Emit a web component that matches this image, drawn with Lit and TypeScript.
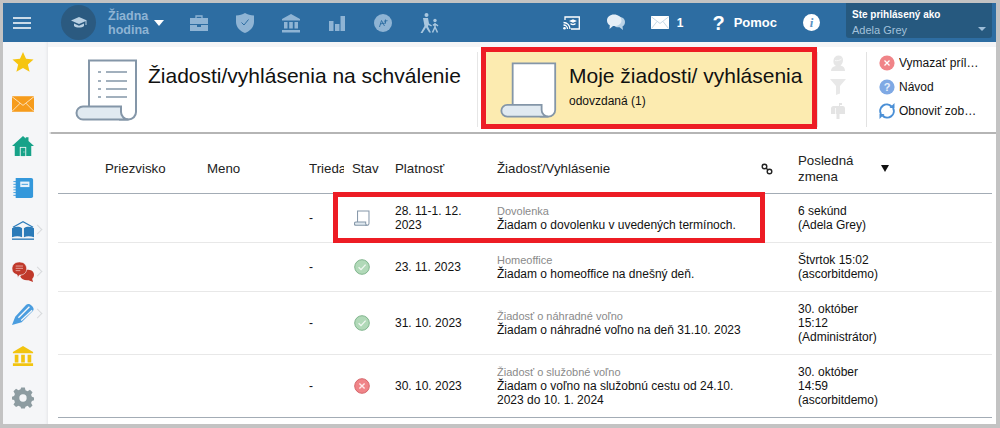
import { LitElement, html, css, svg } from "lit";
import { customElement } from "lit/decorators.js";

const scroll = (lines: boolean) => svg`
  <path d="M14 48V1.5H61V53a7.5 7.5 0 0 1-7.5 7.5H44" fill="#fff" stroke="#8496a8" stroke-width="2"/>
  <path d="M8 47.5H46V53a7.5 7.5 0 0 0 7.5 7.5H8a6.5 6.5 0 0 1-6.5-6.5A6.5 6.5 0 0 1 8 47.5z" fill="#e1eaf1" stroke="#8496a8" stroke-width="2"/>
  ${lines ? svg`<path d="M23 13h3M31 13h21M23 22h3M31 22h21M23 30h3M31 30h21M23 38h3M31 38h21" stroke="#8496a8" stroke-width="1.6" fill="none"/>` : ""}
`;

const okIcon = html`<svg class="st" viewBox="0 0 16 16"><circle cx="8" cy="8" r="7.3" fill="#b1d9b8" stroke="#80b58d"/><path d="M4.6 8.2l2.4 2.4 4.6-5" fill="none" stroke="#f1f8f2" stroke-width="1.3"/></svg>`;
const noIcon = html`<svg class="st" viewBox="0 0 16 16"><circle cx="8" cy="8" r="7.3" fill="#f08488" stroke="#d5676c"/><path d="M5.4 5.4l5.2 5.2M10.6 5.4l-5.2 5.2" fill="none" stroke="#fdeaea" stroke-width="1.4"/></svg>`;
const sentIcon = html`<svg class="st" viewBox="0 0 63 62"><path d="M14 48V3H59V53a7 7 0 0 1-7 7H44" fill="#fff" stroke="#8496a8" stroke-width="4"/><path d="M8 47H46V53a7 7 0 0 0 7 7H8a6.5 6.5 0 0 1 0-13z" fill="#dfe8ef" stroke="#8496a8" stroke-width="4"/></svg>`;

const rows = [
  { st: sentIcon, date: "28. 11-1. 12. 2023", kind: "Dovolenka", text: "Žiadam o dovolenku v uvedených termínoch.", last: ["6 sekúnd", "(Adela Grey)"] },
  { st: okIcon, date: "23. 11. 2023", kind: "Homeoffice", text: "Žiadam o homeoffice na dnešný deň.", last: ["Štvrtok 15:02", "(ascorbitdemo)"] },
  { st: okIcon, date: "31. 10. 2023", kind: "Žiadosť o náhradné voľno", text: "Žiadam o náhradné voľno na deň 31.10. 2023", last: ["30. október", "15:12", "(Administrátor)"] },
  { st: noIcon, date: "30. 10. 2023", kind: "Žiadosť o služobné voľno", text: "Žiadam o voľno na služobnú cestu od 24.10. 2023 do 10. 1. 2024", last: ["30. október", "14:59", "(ascorbitdemo)"] },
];

@customElement("app-root")
export class AppRoot extends LitElement {
  static styles = css`
    :host { display: block; width: 1000px; height: 428px; box-sizing: border-box; padding: 3px 4px 4px 3px; background: #c3c3c3; font-family: "Liberation Sans", Arial, sans-serif; font-size: 12px; color: #111; overflow: hidden; position: relative; }
    .app { height: 421px; display: flex; flex-direction: column; overflow: hidden; background: #fff; }
    svg { display: block; flex: none; }

    .top { height: 39px; flex: none; background: #2d6da2; display: flex; align-items: center; position: relative; z-index: 2; }
    .burger { margin-left: 10px; width: 18px; }
    .cap { margin-left: 30px; width: 35px; height: 35px; border-radius: 50%; background: #2b5a80; display: flex; align-items: center; justify-content: center; }
    .lesson { margin-left: 12px; width: 38px; font-size: 12.5px; font-weight: 700; line-height: 14px; color: #8fb4d4; }
    .caret { margin-left: 8px; width: 0; height: 0; border: 5.5px solid transparent; border-top: 6px solid #fff; border-bottom: 0; }
    .nav { margin-left: 26px; display: flex; gap: 28px; align-items: center; }
    .nav svg { width: 18px; height: 20px; }
    .nav svg.walk { width: 20px; }
    .right { margin-left: auto; display: flex; align-items: center; color: #fff; font-weight: 700; height: 100%; }
    .cast { margin-right: 27px; }
    .chat { margin-right: 26px; }
    .mailcount { margin-left: 8px; margin-right: 29px; }
    .help { font-size: 20px; line-height: 20px; margin-right: 9px; }
    .pomoc { margin-right: 26px; font-size: 13px; }
    .info { width: 17px; height: 17px; border-radius: 50%; background: #fff; color: #5d94c4; font: italic 700 13px/17px "Liberation Serif", serif; text-align: center; margin-right: 26px; }
    .user { width: 146px; height: 35px; margin-right: 4px; align-self: flex-start; box-sizing: border-box; background: #26597f; border-radius: 0 0 3px 3px; padding: 5px 6px 0 6px; position: relative; font-size: 10px; line-height: 13px; }
    .uname { color: #a3c1da; font-weight: 400; font-size: 11px; line-height: 16px; margin-top: 1px; }
    .ucaret { position: absolute; right: 6px; bottom: 7px; width: 0; height: 0; border: 4px solid transparent; border-top: 4px solid #9dbdd8; border-bottom: 0; }

    .body { flex: 1; display: flex; min-height: 0; }
    .side { width: 45px; flex: none; background: #f5f6f8; box-shadow: inset -3px 0 3px -2px #e4e5e8; display: flex; flex-direction: column; }
    .si { height: 42px; flex: none; display: flex; align-items: center; padding: 0 0 2px 9px; box-sizing: border-box; position: relative; }
    .si svg { width: 22px; height: 22px; }
    .chev { position: absolute; left: 31px; top: 16px; width: 6px; height: 6px; border-top: 1.5px solid #d8dadd; border-right: 1.5px solid #d8dadd; transform: rotate(45deg); }

    .main { flex: 1; min-width: 0; display: flex; flex-direction: column; }
    .head { height: 85px; margin-top: 5px; flex: none; background: #fff; box-shadow: 0 2px 1px -0.5px #b5b5b5; display: flex; position: relative; }
    .head::before { content: ""; position: absolute; left: 0; right: 0; top: -5px; height: 5px; background: #f4f5f7; }
    .doc { margin: 12px 0 0 27px; width: 63px; height: 62px; }
    .title { font-size: 21px; line-height: 24px; margin: 17px 0 0 10px; width: 329px; white-space: nowrap; color: #111; }
    .card { width: 336px; height: 82px; box-sizing: border-box; border: 5px solid #ed1c24; background: #fcebb0; display: flex; color: #111; }
    .card .doc2 { width: 57px; height: 58px; margin: 9px 0 0 14px; }
    .card h2 { margin: 12px 0 0 12px; font-weight: 400; font-size: 21px; line-height: 24px; white-space: nowrap; }
    .card p { margin: 6px 0 0 12px; font-size: 12px; line-height: 14px; }
    .cardwrap { border-left: 1px solid #e6e6e6; padding-left: 3px; height: 75px; margin-top: 5px; }
    .cardwrap .card { margin-top: -5px; }
    .tools { width: 50px; height: 75px; margin-top: 5px; border-left: 1px solid #e2e2e2; border-right: 1px solid #e2e2e2; display: flex; flex-direction: column; align-items: flex-start; gap: 8px; padding: 3px 0 0 12px; box-sizing: border-box; }
    .tools svg { width: 16px; height: 16px; }
    .menu { flex: 1; min-width: 0; display: flex; flex-direction: column; margin-top: 3px; padding-left: 12px; padding-right: 17px; }
    .mi { height: 24px; display: flex; align-items: center; gap: 4px; padding-top: 1px; box-sizing: border-box; }
    .mi svg { width: 16px; height: 16px; }
    .mi span { white-space: nowrap; overflow: hidden; text-overflow: ellipsis; min-width: 0; }

    .table { margin: 2px 4px 0 10px; position: relative; }
    .row { display: grid; grid-template-columns: 47px 102px 102px 43px 43px 102px 265px 36px 1fr; border-bottom: 1px solid #e8e8e8; align-items: center; line-height: 14px; }
    .row > div { padding: 10px 0; min-width: 0; }
    .hdr { border-bottom-color: #a3acb5; height: 60px; box-sizing: border-box; padding-top: 10px; font-size: 13.3px; color: #222; }
    .hdr > div { padding: 0; }
    .hdr .clip { width: 35px; overflow: hidden; }
    .hdr .link { margin-left: -1px; }
    .hdr .two { display: flex; align-items: center; }
    .hdr .two span { width: 83px; line-height: 16px; }
    .sort { width: 0; height: 0; border: 4px solid transparent; border-top: 7px solid #111; border-bottom: 0; }
    .row.end { border-bottom-color: #a3acb5; }
    .kind { color: #8a8a8a; font-size: 11px; line-height: 14px; }
    .st { width: 16px; height: 16px; margin-left: 2px; }
    .date { width: 80px; }
    .txt { padding-right: 10px; }
    .mark { position: absolute; left: 275px; top: 58px; width: 432px; height: 51px; box-sizing: border-box; border: 5px solid #ed1c24; pointer-events: none; }
  `;

  render() {
    return html`<div class="app">
      <div class="top">
        <svg class="burger" height="14" viewBox="0 0 18 14"><path d="M0 2h18M0 7h18M0 12h18" stroke="#fff" stroke-width="1.6"/></svg>
        <div class="cap"><svg width="16" height="13" viewBox="0 0 16 13"><path d="M8 1L0 4.500 8 8l8-3.500z" fill="#b9d0e2"/><path d="M3 7.500V10c2 2 8 2 10 0V7.500L8 9.700z" fill="#b9d0e2"/><path d="M15 5v4" stroke="#b9d0e2"/></svg></div>
        <div class="lesson">Žiadna hodina</div>
        <div class="caret"></div>
        <div class="nav">
          <svg viewBox="0 0 18 20"><path d="M6 5V3h6v2" fill="none" stroke="#8fb4d4" stroke-width="1.300"/><path d="M0 5h18v6H0zM0 12h7v2h4v-2h7v6H0z" fill="#8fb4d4"/></svg>
          <svg viewBox="0 0 18 20"><path d="M9 0c2.500 1.500 5.500 2.200 9 2.500V9c0 5-4 9-9 11-5-2-9-6-9-11V2.500C3.500 2.200 6.500 1.500 9 0z" fill="#8fb4d4"/><path d="M5.500 9.500l2.500 2.500 4.500-5.500" fill="none" stroke="#2d6da2" stroke-width="1"/></svg>
          <svg viewBox="0 0 18 20"><path d="M9 1l9 5v1.500H0V6zM2 9h3.500v6.500H2zM7.200 9h3.600v6.500H7.200zM12.500 9H16v6.500h-3.500zM0 17h18v2.500H0z" fill="#8fb4d4"/></svg>
          <svg viewBox="0 0 18 20"><path d="M1 8h4.500v10H1zM7 11h4.500v7H7zM12.500 3H17v15h-4.500z" fill="#8fb4d4"/></svg>
          <svg viewBox="0 0 18 20"><circle cx="9" cy="10" r="9" fill="#8fb4d4"/><path d="M5.500 14l2-6.500 3 5.500M6 11l5.500-1M11.500 6.500v4M10 8.200l3.500-.5" fill="none" stroke="#2d6da2" stroke-width="0.900"/></svg>
          <svg class="walk" viewBox="0 0 20 20"><circle cx="6.500" cy="2" r="2" fill="#a9c7df"/><circle cx="15" cy="7.500" r="1.700" fill="#a9c7df"/><path d="M3 5h5l1 5.500 3 2-.7 1L8.500 12l-.5 1.500 3 6h-1.800L6 14.500 2.500 20H.5l4-7z" fill="#a9c7df"/><path d="M15 10v4l-2.500 5.500M15 14l2.500 5.500M15 10.500l-2 2M15 10.500l3 2.500" fill="none" stroke="#a9c7df" stroke-width="1.500"/></svg>
        </div>
        <div class="right">
          <svg class="cast" width="17" height="14" viewBox="0 0 17 14"><path d="M2 4V1h14.300v12H8" fill="none" stroke="#fff" stroke-width="1.300"/><path d="M10 3.200L6 5l4 1.700L14 5zM7.500 7v1.500c1.500 1 3.500 1 5 0V7L10 8z" fill="#fff"/><path d="M0.500 6.500a6.500 6.500 0 0 1 6.500 6.500M0.500 9a4 4 0 0 1 4 4" fill="none" stroke="#fff" stroke-width="1.300"/><circle cx="1.500" cy="12.300" r="1.300" fill="#fff"/></svg>
          <svg class="chat" width="18" height="17" viewBox="0 0 18 17"><path d="M11 2.500c4 0 7 2.300 7 5.500 0 2-1 3.500-2.500 4.500l.5 3.500-3.500-2.800C9 14 6 12 6 8c0-3 2-5.500 5-5.500z" fill="#b9d2e6"/><path d="M7 .5C3 .5 0 3 0 6.500c0 2.200 1 3.800 2.800 4.800L2.500 15l3.500-3c4.500.5 8.500-1.800 8.500-5.500C14.500 3 11 .5 7 .5z" fill="#e6eff7"/></svg>
          <svg width="18" height="13" viewBox="0 0 18 13"><path d="M0 0h18v13H0z" fill="#fff"/><path d="M0 .5L9 7.500l9-7M.5 12.500L6 5.500M17.500 12.500l-5.500-7" fill="none" stroke="#b9cfe0" stroke-width="0.800"/></svg>
          <span class="mailcount">1</span>
          <span class="help">?</span>
          <span class="pomoc">Pomoc</span>
          <div class="info">i</div>
          <div class="user">Ste prihlásený ako<div class="uname">Adela Grey</div><div class="ucaret"></div></div>
        </div>
      </div>
      <div class="body">
        <div class="side">
          <div class="si"><svg viewBox="0 0 24 24"><path d="M12 1l3.300 7.500 8.200.8-6.200 5.400 1.900 8L12 18.500 4.800 22.700l1.900-8L.5 9.300l8.200-.8z" fill="#f6c511"/></svg></div>
          <div class="si"><svg viewBox="0 0 24 24"><path d="M0 3.500h24v17H0z" fill="#f69c1c"/><path d="M0 4L12 13.500 24 4M0 20L9 11M24 20L15 11" fill="none" stroke="#fde6c4" stroke-width="1"/></svg></div>
          <div class="si"><svg viewBox="0 0 24 24"><path d="M12 1l3 2.700V2.500h3V6.500L24 12h-3v11H3V12H0z" fill="#17a288"/><path d="M8.500 13h7v10h-7z" fill="#eaf4f2"/><path d="M9.500 14h5v9h-5z" fill="#17a288"/><path d="M12.500 18h1v1h-1z" fill="#eaf4f2"/></svg></div>
          <div class="si"><svg viewBox="0 0 24 24"><path d="M4 1h17a2 2 0 0 1 2 2v18a2 2 0 0 1-2 2H4z" fill="#3498db"/><path d="M9 5h10v6H9z" fill="#e6f2fb"/><path d="M10.500 8h7" stroke="#3498db"/><path d="M1.500 5H5M1.500 8H5M1.500 11H5M1.500 14H5M1.500 17H5M1.500 20H5" stroke="#3498db"/></svg></div>
          <div class="si"><svg viewBox="0 0 24 24"><path d="M1 9l11-6 11 6" fill="none" stroke="#2b7bb9" stroke-width="1.200"/><path d="M0 10c4-2 8-2 11 0v10c-3-1.500-7-1.500-11 0zM24 10c-4-2-8-2-11 0v10c3-1.500 7-1.500 11 0z" fill="#2b7bb9"/><path d="M0 22h24" stroke="#2b7bb9" stroke-width="1.500"/></svg><i class="chev"></i></div>
          <div class="si"><svg viewBox="0 0 24 24"><path d="M13 10c5-1 11 0 11 5 0 2-1 3.500-2 4.500l1 3.500-5-2c-4 .5-8-1-9-4z" fill="#c0392b"/><path d="M8 1c5 0 8 3 8 7.500S12.500 15.500 8 15.500L6.500 18l-1-3C2 14 0 12 0 8.500 0 4 3 1 8 1z" fill="#c0392b" stroke="#f5f6f8" stroke-width="0.700"/><path d="M4 5.500h8M4 8h8M4 10.500h5" stroke="#e9a9a2" stroke-width="1"/></svg><i class="chev"></i></div>
          <div class="si"><svg viewBox="0 0 24 24"><path d="M0 24l3.500-9L15 2.500c2-2 4.500-1.500 6.500.5s3 4 1 6L10.500 21z" fill="#4a9ddf"/><path d="M7 16L19 4M10 19L22 8" stroke="#f5f6f8" stroke-width="1.500"/></svg><i class="chev"></i></div>
          <div class="si"><svg viewBox="0 0 24 24"><path d="M12 1l11 6.500V9H1V7.500zM3 10.500h4v8.500H3zM10 10.500h4v8.500h-4zM17 10.500h4v8.500h-4zM1 20h22v3H1z" fill="#f2c40f"/></svg></div>
          <div class="si"><svg viewBox="0 0 24 24"><path d="M10 1h4l.7 3 2.300 1 2.600-1.600 2.800 2.800L20.800 9l.9 2.200L24 12v3l-2.300.8-.9 2.200 1.600 2.600-2.800 2.800L17 21l-2.300 1-.7 2h-4l-.7-2L7 21l-2.600 1.400-2.800-2.800L3.200 17l-.9-2.200L0 14v-3l2.300-.8L3.200 8 1.600 5.200l2.800-2.800L7 4l2.300-1z" fill="#8d9ca1" transform="translate(0 -.5)"/><circle cx="12" cy="12" r="4" fill="#f5f6f8"/></svg></div>
        </div>
        <div class="main">
          <div class="head">
            <svg class="doc" viewBox="0 0 63 62">${scroll(true)}</svg>
            <div class="title">Žiadosti/vyhlásenia na schválenie</div>
            <div class="cardwrap"><div class="card">
              <svg class="doc2" viewBox="0 0 63 62">${scroll(false)}</svg>
              <div><h2>Moje žiadosti/ vyhlásenia</h2><p>odovzdaná (1)</p></div>
            </div></div>
            <div class="tools">
              <svg viewBox="0 0 16 16"><path d="M1 16c0-3 2-4.500 5-5-2-1-3-3-2.500-6C4 2 6 .5 8.500.5c3 0 4.500 2 4.500 4.500 0 2.500-1 4.500-2.500 5.500 3 .5 4.500 2.500 4.500 5.500z" fill="#e6e6e6"/><path d="M5 5.500c2 .5 5 0 6.500-1.500" fill="none" stroke="#fafafa" stroke-width="0.800"/></svg>
              <svg viewBox="0 0 16 16"><path d="M0 0h16L10 7v7.500L6 16V7z" fill="#e8e8e8"/></svg>
              <svg viewBox="0 0 16 16"><path d="M4 3h9a2.500 2.500 0 0 1 2 2.500V11H1V5.500A2.500 2.500 0 0 1 4 3zM6.500 11h3v5h-3zM9 0h3v2H10v2H9z" fill="#e4e4e4"/><path d="M5.500 5v6" stroke="#f8f8f8"/></svg>
            </div>
            <div class="menu">
              <div class="mi"><svg viewBox="0 0 16 16"><circle cx="8" cy="8" r="7.600" fill="#f08488"/><path d="M5.500 5.500l5 5M10.500 5.500l-5 5" stroke="#fff" stroke-width="1.300"/></svg><span>Vymazať prílohy</span></div>
              <div class="mi"><svg viewBox="0 0 16 16"><circle cx="8" cy="8" r="7.600" fill="#7fa9e4"/><text x="8" y="12" text-anchor="middle" font-size="11" font-family="Liberation Sans" font-weight="700" fill="#e8f0fb">?</text></svg><span>Návod</span></div>
              <div class="mi"><svg viewBox="0 0 16 16"><path d="M12.500 3.500A6.500 6.500 0 0 0 2 11M3.500 12.500A6.500 6.500 0 0 0 14 5" fill="none" stroke="#4a8fd6" stroke-width="2"/><path d="M10.500 5h5V0zM5.500 11H.5v5z" fill="#4a8fd6"/></svg><span>Obnoviť zobrazenie</span></div>
            </div>
          </div>
          <div class="table">
            <div class="row hdr">
              <div></div><div>Priezvisko</div><div>Meno</div><div class="clip">Trieda</div><div>Stav</div><div>Platnosť</div><div>Žiadosť/Vyhlásenie</div>
              <div class="link"><svg width="12" height="12" viewBox="0 0 12 12"><g fill="none" stroke="#222" stroke-width="1.400"><circle cx="3.500" cy="3.500" r="2.300"/><circle cx="8.500" cy="8.500" r="2.300"/><path d="M5 5l2 2"/></g></svg></div>
              <div class="two"><span>Posledná zmena</span><i class="sort"></i></div>
            </div>
            ${rows.map((r, i) => html`<div class="row ${i === rows.length - 1 ? "end" : ""}">
              <div></div><div></div><div></div><div>-</div>
              <div>${r.st}</div>
              <div><div class="date">${r.date}</div></div>
              <div class="txt"><div class="kind">${r.kind}</div>${r.text}</div>
              <div></div>
              <div>${r.last.map((l) => html`<div>${l}</div>`)}</div>
            </div>`)}
            <div class="mark"></div>
          </div>
        </div>
      </div>
    </div>`;
  }
}
